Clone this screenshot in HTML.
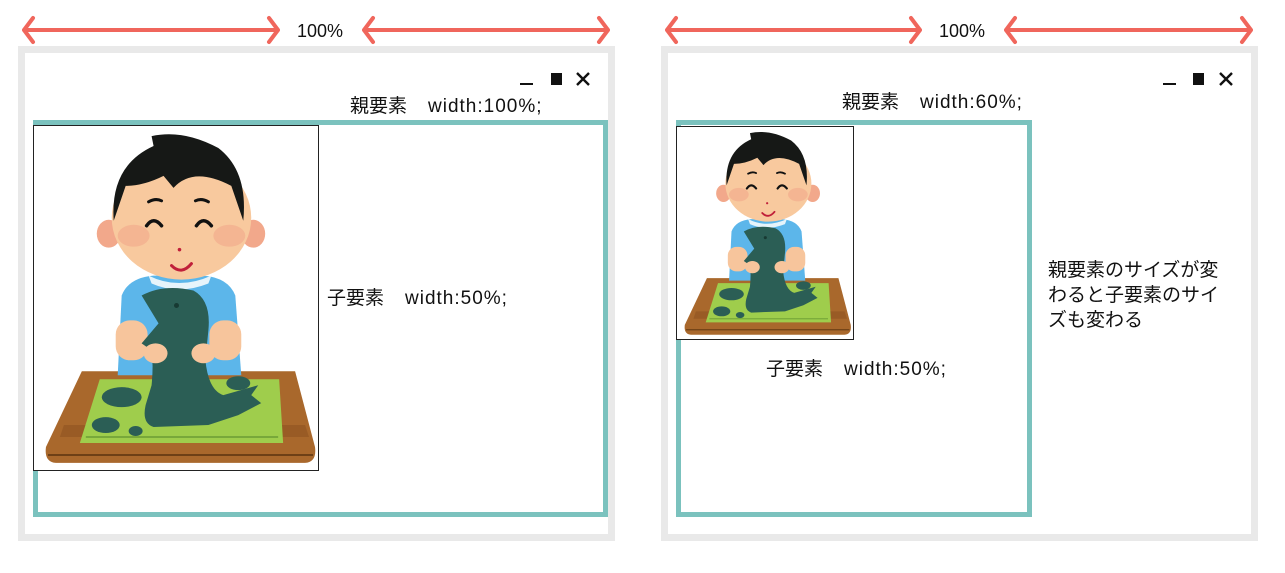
<!DOCTYPE html>
<html><head><meta charset="utf-8"><style>
body{margin:0;width:1285px;height:573px;background:#fff;position:relative;overflow:hidden;font-family:"Liberation Sans","Noto Sans CJK JP",sans-serif;color:#111}
.a{position:absolute}
.frame{position:absolute;border:7px solid #e9e9e9;box-sizing:border-box;background:#fff}
.teal{position:absolute;border:5px solid #7bc2be;box-sizing:border-box}
.box{position:absolute;border:1px solid #222;box-sizing:border-box;background:#fff}
.t{position:absolute;font-size:19px;white-space:nowrap;line-height:22px}
.sp{display:inline-block;width:21px}
.l{letter-spacing:1px}
</style></head><body>
<svg width="0" height="0" style="position:absolute"><defs>
<symbol id="boy" viewBox="0 0 285 345">
<path d="M48 246 L262 246 L282 322 Q284 337 272 338 L22 338 Q10 337 12 322 Z" fill="#a9682c"/>
<path d="M30 300 L272 300 L276 312 L26 312 Z" fill="#8f5421" opacity=".6"/>
<path d="M14 330 L280 330" stroke="#6e4016" stroke-width="2"/>
<path d="M66 254 L246 254 L250 318 L46 318 Z" fill="#9fcd4c"/>
<path d="M52 312 L245 312" stroke="#78a83a" stroke-width="2"/>
<path d="M88 170 Q95 152 120 150 L170 150 Q195 152 202 170 L208 250 L84 250 Z" fill="#5cb6ea"/>
<path d="M115 150 Q145 165 178 150 L175 158 Q145 170 118 158 Z" fill="#e6f4fb"/>
<rect x="82" y="195" width="32" height="40" rx="14" fill="#f7c59c"/>
<rect x="176" y="195" width="32" height="40" rx="14" fill="#f7c59c"/>
<path d="M108 170 Q130 158 160 165 Q178 175 175 205 L172 235 Q175 265 190 270 L225 260 L218 270 L228 278 L205 290 L175 300 L120 302 Q108 298 112 280 L118 260 Q120 240 118 225 L108 218 L125 198 Z" fill="#2b5e55"/>
<circle cx="143" cy="180" r="2.5" fill="#173a33"/>
<ellipse cx="88" cy="272" rx="20" ry="10" fill="#2b5e55"/>
<ellipse cx="72" cy="300" rx="14" ry="8" fill="#2b5e55"/>
<ellipse cx="102" cy="306" rx="7" ry="5" fill="#2b5e55"/>
<ellipse cx="205" cy="258" rx="12" ry="7" fill="#2b5e55"/>
<ellipse cx="122" cy="228" rx="12" ry="10" fill="#f7c59c"/>
<ellipse cx="170" cy="228" rx="12" ry="10" fill="#f7c59c"/>
<ellipse cx="75" cy="108" rx="12" ry="14" fill="#f2a88b"/>
<ellipse cx="220" cy="108" rx="12" ry="14" fill="#f2a88b"/>
<ellipse cx="148" cy="92" rx="70" ry="62" fill="#f8c99e"/>
<path d="M80 95 Q76 40 120 20 L118 10 Q150 3 185 22 Q215 45 210 95 L198 60 Q160 40 140 62 L130 50 Q110 60 92 60 Z" fill="#161816"/>
<ellipse cx="100" cy="110" rx="16" ry="11" fill="#f2a88b" opacity=".6"/>
<ellipse cx="196" cy="110" rx="16" ry="11" fill="#f2a88b" opacity=".6"/>
<path d="M113 100 Q120 90 128 100 M163 100 Q170 90 178 100" stroke="#111" stroke-width="3.5" fill="none" stroke-linecap="round"/>
<path d="M115 76 Q122 72 128 75 M162 75 Q168 72 175 76" stroke="#111" stroke-width="3" fill="none" stroke-linecap="round"/>
<path d="M138 140 Q148 150 158 138" stroke="#c0203a" stroke-width="3" fill="none" stroke-linecap="round"/>
<circle cx="146" cy="124" r="1.8" fill="#c0203a"/>
</symbol>
</defs></svg>

<svg class="a" style="left:0;top:0" width="1285" height="60">
<g stroke="#f0665c" stroke-width="4" fill="none" stroke-linecap="round" stroke-linejoin="round">
<path d="M24 30 H278 M33 18 L24 30 L33 42 M269 18 L278 30 L269 42"/>
<path d="M364 30 H608 M373 18 L364 30 L373 42 M599 18 L608 30 L599 42"/>
<path d="M667 30 H920 M676 18 L667 30 L676 42 M911 18 L920 30 L911 42"/>
<path d="M1006 30 H1251 M1015 18 L1006 30 L1015 42 M1242 18 L1251 30 L1242 42"/>
</g>
<text x="320" y="37" font-size="18" text-anchor="middle" font-family="Liberation Sans" fill="#111">100%</text>
<text x="962" y="37" font-size="18" text-anchor="middle" font-family="Liberation Sans" fill="#111">100%</text>
</svg>

<div class="frame" style="left:18px;top:46px;width:597px;height:495px"></div>
<div class="teal" style="left:33px;top:120px;width:575px;height:397px"></div>
<div class="box" style="left:33px;top:125px;width:286px;height:346px"><svg width="284" height="344"><use href="#boy"/></svg></div>
<div class="t" style="left:350px;top:96px">親要素<span class="sp"></span><span class="l">width:100%;</span></div>
<div class="t" style="left:327px;top:288px">子要素<span class="sp"></span><span class="l">width:50%;</span></div>
<svg class="a" style="left:515px;top:68px" width="80" height="22"><path d="M5 16 H18" stroke="#111" stroke-width="2"/><rect x="36" y="5" width="11" height="12" fill="#111"/><path d="M62 5 L74 17 M74 5 L62 17" stroke="#111" stroke-width="2.4"/></svg>

<div class="frame" style="left:661px;top:46px;width:597px;height:495px"></div>
<div class="teal" style="left:676px;top:120px;width:356px;height:397px"></div>
<div class="box" style="left:676px;top:126px;width:178px;height:214px"><svg width="176" height="212"><use href="#boy" width="176" height="212"/></svg></div>
<div class="t" style="left:842px;top:92px">親要素<span class="sp"></span><span class="l">width:60%;</span></div>
<div class="t" style="left:766px;top:359px">子要素<span class="sp"></span><span class="l">width:50%;</span></div>
<div class="t" style="left:1048px;top:258px;line-height:25px;white-space:normal;width:182px">親要素のサイズが変わると子要素のサイズも変わる</div>
<svg class="a" style="left:1158px;top:68px" width="80" height="22"><path d="M5 16 H18" stroke="#111" stroke-width="2"/><rect x="35" y="5" width="11" height="12" fill="#111"/><path d="M62 5 L74 17 M74 5 L62 17" stroke="#111" stroke-width="2.4"/></svg>
</body></html>
